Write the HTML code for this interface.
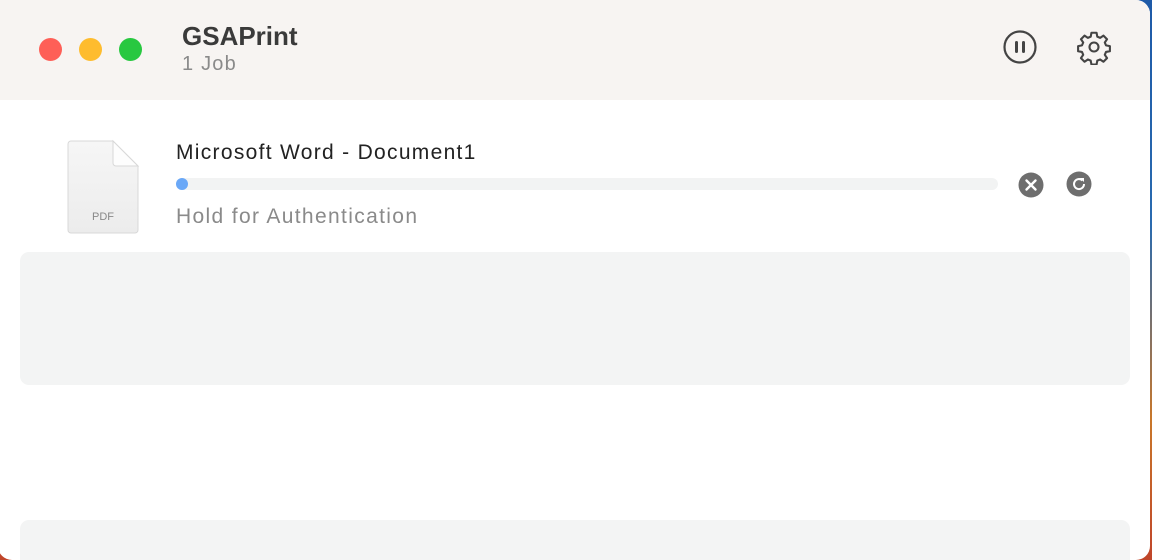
<!DOCTYPE html>
<html><head><style>
html,body{margin:0;padding:0;width:1152px;height:560px;overflow:hidden;font-family:"Liberation Sans",sans-serif}
body{background:linear-gradient(180deg,#1e5aa8 0%,#2a6bb0 40%,#c9772a 75%,#c0452a 100%);position:relative}
.win{position:absolute;left:-2px;top:0;width:1152px;height:560px;background:#fff;border-radius:0 14px 14px 14px;overflow:hidden}
.hdr{position:absolute;left:0;top:0;width:100%;height:100px;background:#f7f4f2}
.dot{position:absolute;top:38px;width:23px;height:23px;border-radius:50%}
.title{position:absolute;left:184px;top:21px;font-size:26px;font-weight:bold;color:#3a3a3a}
.sub{position:absolute;left:184px;top:53px;font-size:20px;color:#8a8a8a;letter-spacing:1.2px}
.box{position:absolute;left:22px;width:1110px;background:#f3f4f4;border-radius:9px}
</style></head><body>
<div class="win">
<div class="hdr">
<div class="dot" style="left:41px;background:#fe5f57"></div>
<div class="dot" style="left:81px;background:#febc2e"></div>
<div class="dot" style="left:121px;background:#28c840"></div>
<div class="title">GSAPrint</div>
<div class="sub">1 Job</div>
<svg style="position:absolute;left:1005px;top:30px" width="34" height="34" viewBox="0 0 34 34"><circle cx="17" cy="17" r="15.5" fill="none" stroke="#444" stroke-width="2.2"/><rect x="12" y="11" width="3" height="12" rx="1.5" fill="#444"/><rect x="19" y="11" width="3" height="12" rx="1.5" fill="#444"/></svg>
<svg style="position:absolute;left:1078px;top:29px" width="36" height="36" viewBox="0 0 24 24"><path fill="none" stroke="#444" stroke-width="1.4" stroke-linejoin="round" d="M10.3 2.5h3.4l.5 2.6 1.9.8 2.2-1.5 2.4 2.4-1.5 2.2.8 1.9 2.6.5v3.4l-2.6.5-.8 1.9 1.5 2.2-2.4 2.4-2.2-1.5-1.9.8-.5 2.6h-3.4l-.5-2.6-1.9-.8-2.2 1.5-2.4-2.4 1.5-2.2-.8-1.9-2.6-.5v-3.4l2.6-.5.8-1.9-1.5-2.2 2.4-2.4 2.2 1.5 1.9-.8z"/><circle cx="12" cy="12" r="3" fill="none" stroke="#444" stroke-width="1.4"/></svg>
</div>
<svg style="position:absolute;left:68px;top:138px" width="76" height="98" viewBox="0 0 76 98"><defs><linearGradient id="g" x1="0" y1="0" x2="0" y2="1"><stop offset="0" stop-color="#f6f6f6"/><stop offset="1" stop-color="#ececec"/></linearGradient></defs><path d="M5 3h42l25 25v64a3 3 0 0 1-3 3H5a3 3 0 0 1-3-3V6a3 3 0 0 1 3-3z" fill="url(#g)" stroke="#d8d8d8"/><path d="M47 3v22a3 3 0 0 0 3 3h22z" fill="#fdfdfd" stroke="#d8d8d8"/><text x="37" y="82" font-family="Liberation Sans" font-size="11" fill="#888" text-anchor="middle">PDF</text></svg>
<div style="position:absolute;left:178px;top:141px;font-size:21px;letter-spacing:1.3px;color:#222">Microsoft Word - Document1</div>
<div style="position:absolute;left:178px;top:178px;width:822px;height:12px;border-radius:6px;background:#f2f3f3"></div>
<div style="position:absolute;left:178px;top:178px;width:12px;height:12px;border-radius:6px;background:#6aa8f7"></div>
<div style="position:absolute;left:178px;top:205px;font-size:21px;letter-spacing:1.35px;color:#8a8a8a">Hold for Authentication</div>
<svg style="position:absolute;left:1020px;top:172px" width="26" height="26" viewBox="0 0 26 26"><circle cx="13" cy="13" r="12.5" fill="#6e6e6e"/><path d="M8.5 8.5l9 9M17.5 8.5l-9 9" stroke="#fff" stroke-width="2.4" stroke-linecap="round"/></svg>
<svg style="position:absolute;left:1068px;top:171px" width="26" height="26" viewBox="0 0 26 26"><circle cx="13" cy="13" r="12.5" fill="#6e6e6e"/><path d="M16.5 9.5A5 5 0 1 0 18 13" fill="none" stroke="#fff" stroke-width="2"/><path d="M14 7h4v4z" fill="#fff"/></svg>
<div class="box" style="top:252px;height:133px"></div>
<div class="box" style="top:520px;height:40px;border-radius:9px 9px 0 0"></div>
</div>
</body></html>
